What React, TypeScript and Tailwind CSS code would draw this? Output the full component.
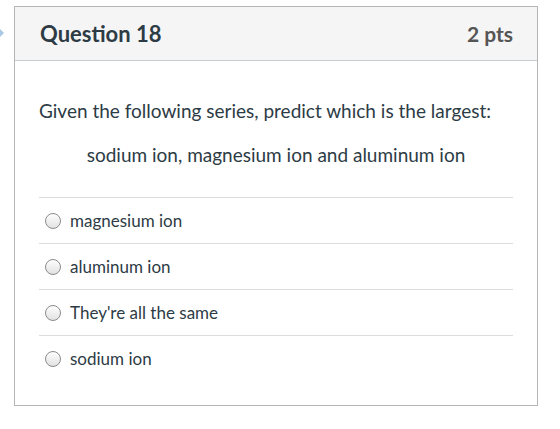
const ANSWERS = ["magnesium ion", "aluminum ion", "They're all the same", "sodium ion"];

function Radio() {
  return (
    <span className="block h-[16px] w-[16px] shrink-0 rounded-full border border-[#8a8a8a] bg-[linear-gradient(to_bottom,#fdfdfd,#e2e2e2)] shadow-[inset_0_1px_1px_rgba(255,255,255,0.9)]" />
  );
}

export default function App() {
  return (
    <div className="relative h-[429px] w-[560px] overflow-hidden bg-white font-['Lato','Liberation_Sans',sans-serif] text-[#2d3b45]">
      {/* nav chevron peeking in from the left edge */}
      <svg className="absolute left-0 top-[27px]" width="6" height="12" viewBox="0 0 6 12">
        <path d="M-2 0 L4 6 L-2 12 Z" fill="#a9c8e6" />
      </svg>

      <div className="ml-[14px] mt-[6px] flex h-[400px] w-[524px] flex-col border border-[#b5b5b5]">
        <div className="flex h-[54px] items-center justify-between border-b border-[#c7cdd1] bg-[#f5f5f5] pl-[25px] pr-[24px]">
          <h2 className="text-[22px] font-bold leading-none">Question 18</h2>
          <span className="text-[21px] font-bold leading-none text-[#555]">2 pts</span>
        </div>

        <div className="px-[24px] pt-[37px]">
          <p className="text-[19px] leading-[26px]">Given the following series, predict which is the largest:</p>
          <p className="mt-[18px] text-center text-[19px] leading-[26px]">
            sodium ion, magnesium ion and aluminum ion
          </p>

          <ul className="mt-[29px]">
            {ANSWERS.map((a) => (
              <li key={a} className="flex h-[46px] items-center gap-[9px] border-t border-[#dcdcdc] pl-[6px]">
                <Radio />
                <span className="text-[17px]">{a}</span>
              </li>
            ))}
          </ul>
        </div>
      </div>
    </div>
  );
}
